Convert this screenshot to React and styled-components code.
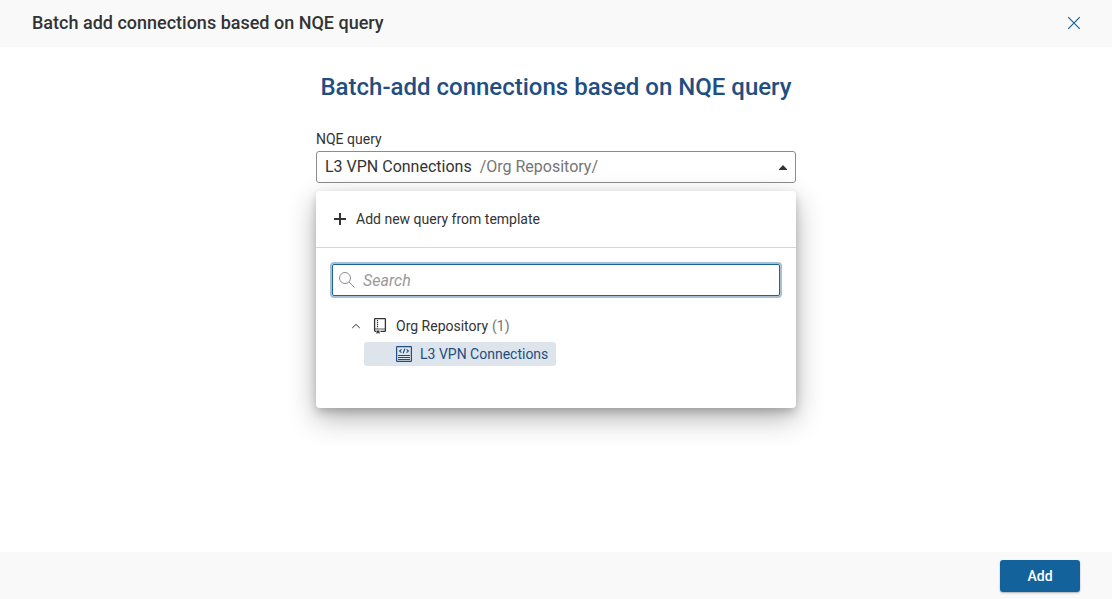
import { useState } from "react";
import styled, { createGlobalStyle } from "styled-components";

const GlobalStyle = createGlobalStyle`
  * {
    box-sizing: border-box;
  }

  body {
    margin: 0;
    background: #fff;
    color: #333;
    font-family: Roboto, "Liberation Sans", sans-serif;
    font-size: 14px;
    line-height: 20px;
  }

  button, input {
    font: inherit;
    color: inherit;
  }
`;

const Dialog = styled.div`
  display: flex;
  flex-direction: column;
  min-height: 100vh;
`;

const Header = styled.header`
  display: flex;
  align-items: center;
  justify-content: space-between;
  height: 47px;
  padding: 0 28px 0 32px;
  border-bottom: 1px solid #f9f9f9;
  background: #f9f9f9;
`;

const HeaderTitle = styled.h1`
  margin: 0;
  font-size: 18px;
  font-weight: 500;
  line-height: 24px;
`;

const PlainButton = styled.button`
  display: flex;
  align-items: center;
  padding: 0;
  border: 0;
  background: none;
  cursor: pointer;
`;

const CloseButton = styled(PlainButton)`
  justify-content: center;
  width: 20px;
  height: 20px;
  color: #14629c;
`;

const Content = styled.main`
  flex: 1;
  width: 100%;
  max-width: 480px;
  margin: 0 auto;
  padding-top: 24px;
`;

const Title = styled.h2`
  margin: 0 0 26px;
  color: #1f4e82;
  font-size: 24px;
  font-weight: 500;
  line-height: 32px;
  text-align: center;
  white-space: nowrap;
`;

const Label = styled.label`
  display: block;
  margin-bottom: 2px;
`;

const Field = styled.div`
  position: relative;
`;

const SelectButton = styled(PlainButton)`
  width: 100%;
  height: 32px;
  padding: 0 8px;
  gap: 8px;
  border: 1px solid #8c8c8c;
  border-radius: 3px;
  background: #fff;
  font-size: 16px;
  text-align: left;
`;

const Muted = styled.span`
  color: #757575;
`;

const Arrow = styled.svg`
  margin-left: auto;
`;

const Panel = styled.div`
  position: absolute;
  top: 100%;
  left: 0;
  right: 0;
  margin-top: 8px;
  min-height: 217px;
  border-radius: 4px;
  background: #fff;
  box-shadow: 0 10px 28px rgba(0, 0, 0, 0.3), 0 4px 8px rgba(0, 0, 0, 0.18);
`;

const AddQuery = styled(PlainButton)`
  width: 100%;
  height: 57px;
  padding: 0 16px;
  gap: 8px;
  border-bottom: 1px solid #d6d6d6;
`;

const SearchBox = styled.div`
  display: flex;
  align-items: center;
  gap: 8px;
  height: 32px;
  margin: 16px 16px 18px;
  padding: 0 6px;
  border: 1px solid #1a6496;
  border-radius: 2px;
  box-shadow: 0 0 0 2px #a9bfd4;
`;

const SearchInput = styled.input`
  flex: 1;
  min-width: 0;
  padding: 2px 0 0;
  border: 0;
  outline: 0;
  background: none;
  font-size: 16px;

  &::placeholder {
    color: #999;
    font-style: italic;
    opacity: 1;
  }
`;

const Tree = styled.ul`
  margin: 0;
  padding: 0 0 0 32px;
  list-style: none;
`;

const SubTree = styled.ul`
  margin: 0;
  padding: 4px 0 0 16px;
  list-style: none;
`;

const TreeItem = styled(PlainButton)`
  height: 24px;
  gap: 8px;
  padding: ${({ $nested }) => ($nested ? "0 8px 0 32px" : "0")};
  border-radius: 3px;
  background: ${({ $selected }) => ($selected ? "#dde4eb" : "none")};
  color: ${({ $selected }) => ($selected ? "#1f4e82" : "inherit")};
`;

const Count = styled(Muted)`
  margin-left: 4px;
`;

const Footer = styled.footer`
  display: flex;
  align-items: center;
  justify-content: flex-end;
  height: 47px;
  padding: 0 32px;
  background: #f9f9f9;
`;

const PrimaryButton = styled.button`
  width: 80px;
  height: 32px;
  padding: 0;
  border: 0;
  border-radius: 3px;
  background: #14629c;
  box-shadow: 0 1px 2px rgba(0, 0, 0, 0.3);
  color: #fff;
  font-weight: 500;
  cursor: pointer;
`;

const CloseIcon = () => (
  <svg width="14" height="14" viewBox="0 0 14 14" fill="none" stroke="currentColor" strokeWidth="1.2">
    <path d="M1.2 1.2l11.6 11.6M12.8 1.2L1.2 12.8" />
  </svg>
);

const PlusIcon = () => (
  <svg width="16" height="16" viewBox="0 0 16 16" fill="none" stroke="currentColor" strokeWidth="2">
    <path d="M8 2v12M2 8h12" />
  </svg>
);

const SearchIcon = () => (
  <svg width="16" height="16" viewBox="0 0 16 16" fill="none" stroke="#8c8c8c">
    <circle cx="6" cy="6" r="5.5" />
    <path d="M10 10l5.6 5.6" />
  </svg>
);

const ChevronIcon = () => (
  <svg width="16" height="16" viewBox="0 0 16 16" fill="none" stroke="currentColor">
    <path d="M4.2 10L8 6.4l3.8 3.6" />
  </svg>
);

const RepositoryIcon = () => (
  <svg width="16" height="16" viewBox="0 0 16 16" fill="none" stroke="currentColor">
    <path
      d="M4 13.4h-.6a.9.9 0 0 1-.8-.9V1.4a.8.8 0 0 1 .8-.8h9.2a.8.8 0 0 1 .8.8v11.2a.8.8 0 0 1-.8.8H8.5"
      strokeWidth="1.3"
    />
    <path d="M2.5 11h11" strokeWidth=".8" />
    <path d="M5.5 2v8.5" strokeWidth="1.2" strokeDasharray="1.2 .8" />
    <path d="M4.5 12.5h3V16L6 14.7 4.5 16z" fill="currentColor" stroke="none" />
  </svg>
);

const QueryIcon = () => (
  <svg width="16" height="16" viewBox="0 0 16 16" fill="none" stroke="currentColor">
    <rect x=".6" y=".6" width="14.8" height="14.8" rx=".6" strokeWidth="1.2" />
    <path d="M2 9.5h12M2 11.5h12M2 13.5h12" />
    <path d="M5.4 3.4L3.6 5l1.8 1.6M10.6 3.4L12.4 5l-1.8 1.6M8.8 2.8L7.2 7.2" strokeWidth="1.1" />
  </svg>
);

const App = () => {
  const [open, setOpen] = useState(true);
  const [expanded, setExpanded] = useState(true);
  const [search, setSearch] = useState("");

  return (
    <>
      <GlobalStyle />
      <Dialog role="dialog" aria-labelledby="dialog-title">
        <Header>
          <HeaderTitle id="dialog-title">Batch add connections based on NQE query</HeaderTitle>
          <CloseButton type="button" aria-label="Close">
            <CloseIcon />
          </CloseButton>
        </Header>

        <Content>
          <Title>Batch-add connections based on NQE query</Title>
          <Label htmlFor="nqe-query">NQE query</Label>
          <Field>
            <SelectButton
              id="nqe-query"
              type="button"
              role="combobox"
              aria-haspopup="tree"
              aria-expanded={open}
              aria-controls="query-panel"
              onClick={() => setOpen(!open)}
            >
              <span>L3 VPN Connections</span>
              <Muted>/Org Repository/</Muted>
              <Arrow width="8" height="5" viewBox="0 0 8 5" fill="#333">
                <path d="M0 5V4.2L4 0l4 4.2V5z" />
              </Arrow>
            </SelectButton>

            {open && (
              <Panel id="query-panel">
                <AddQuery type="button">
                  <PlusIcon />
                  Add new query from template
                </AddQuery>
                <SearchBox>
                  <SearchIcon />
                  <SearchInput
                    type="text"
                    aria-label="Search"
                    placeholder="Search"
                    value={search}
                    onChange={(e) => setSearch(e.target.value)}
                  />
                </SearchBox>
                <Tree>
                  <li>
                    <TreeItem type="button" aria-expanded={expanded} onClick={() => setExpanded(!expanded)}>
                      <ChevronIcon />
                      <RepositoryIcon />
                      <span>
                        Org Repository<Count>(1)</Count>
                      </span>
                    </TreeItem>
                    {expanded && (
                      <SubTree>
                        <li>
                          <TreeItem type="button" $nested $selected>
                            <QueryIcon />
                            L3 VPN Connections
                          </TreeItem>
                        </li>
                      </SubTree>
                    )}
                  </li>
                </Tree>
              </Panel>
            )}
          </Field>
        </Content>

        <Footer>
          <PrimaryButton type="button">Add</PrimaryButton>
        </Footer>
      </Dialog>
    </>
  );
};

export default App;
